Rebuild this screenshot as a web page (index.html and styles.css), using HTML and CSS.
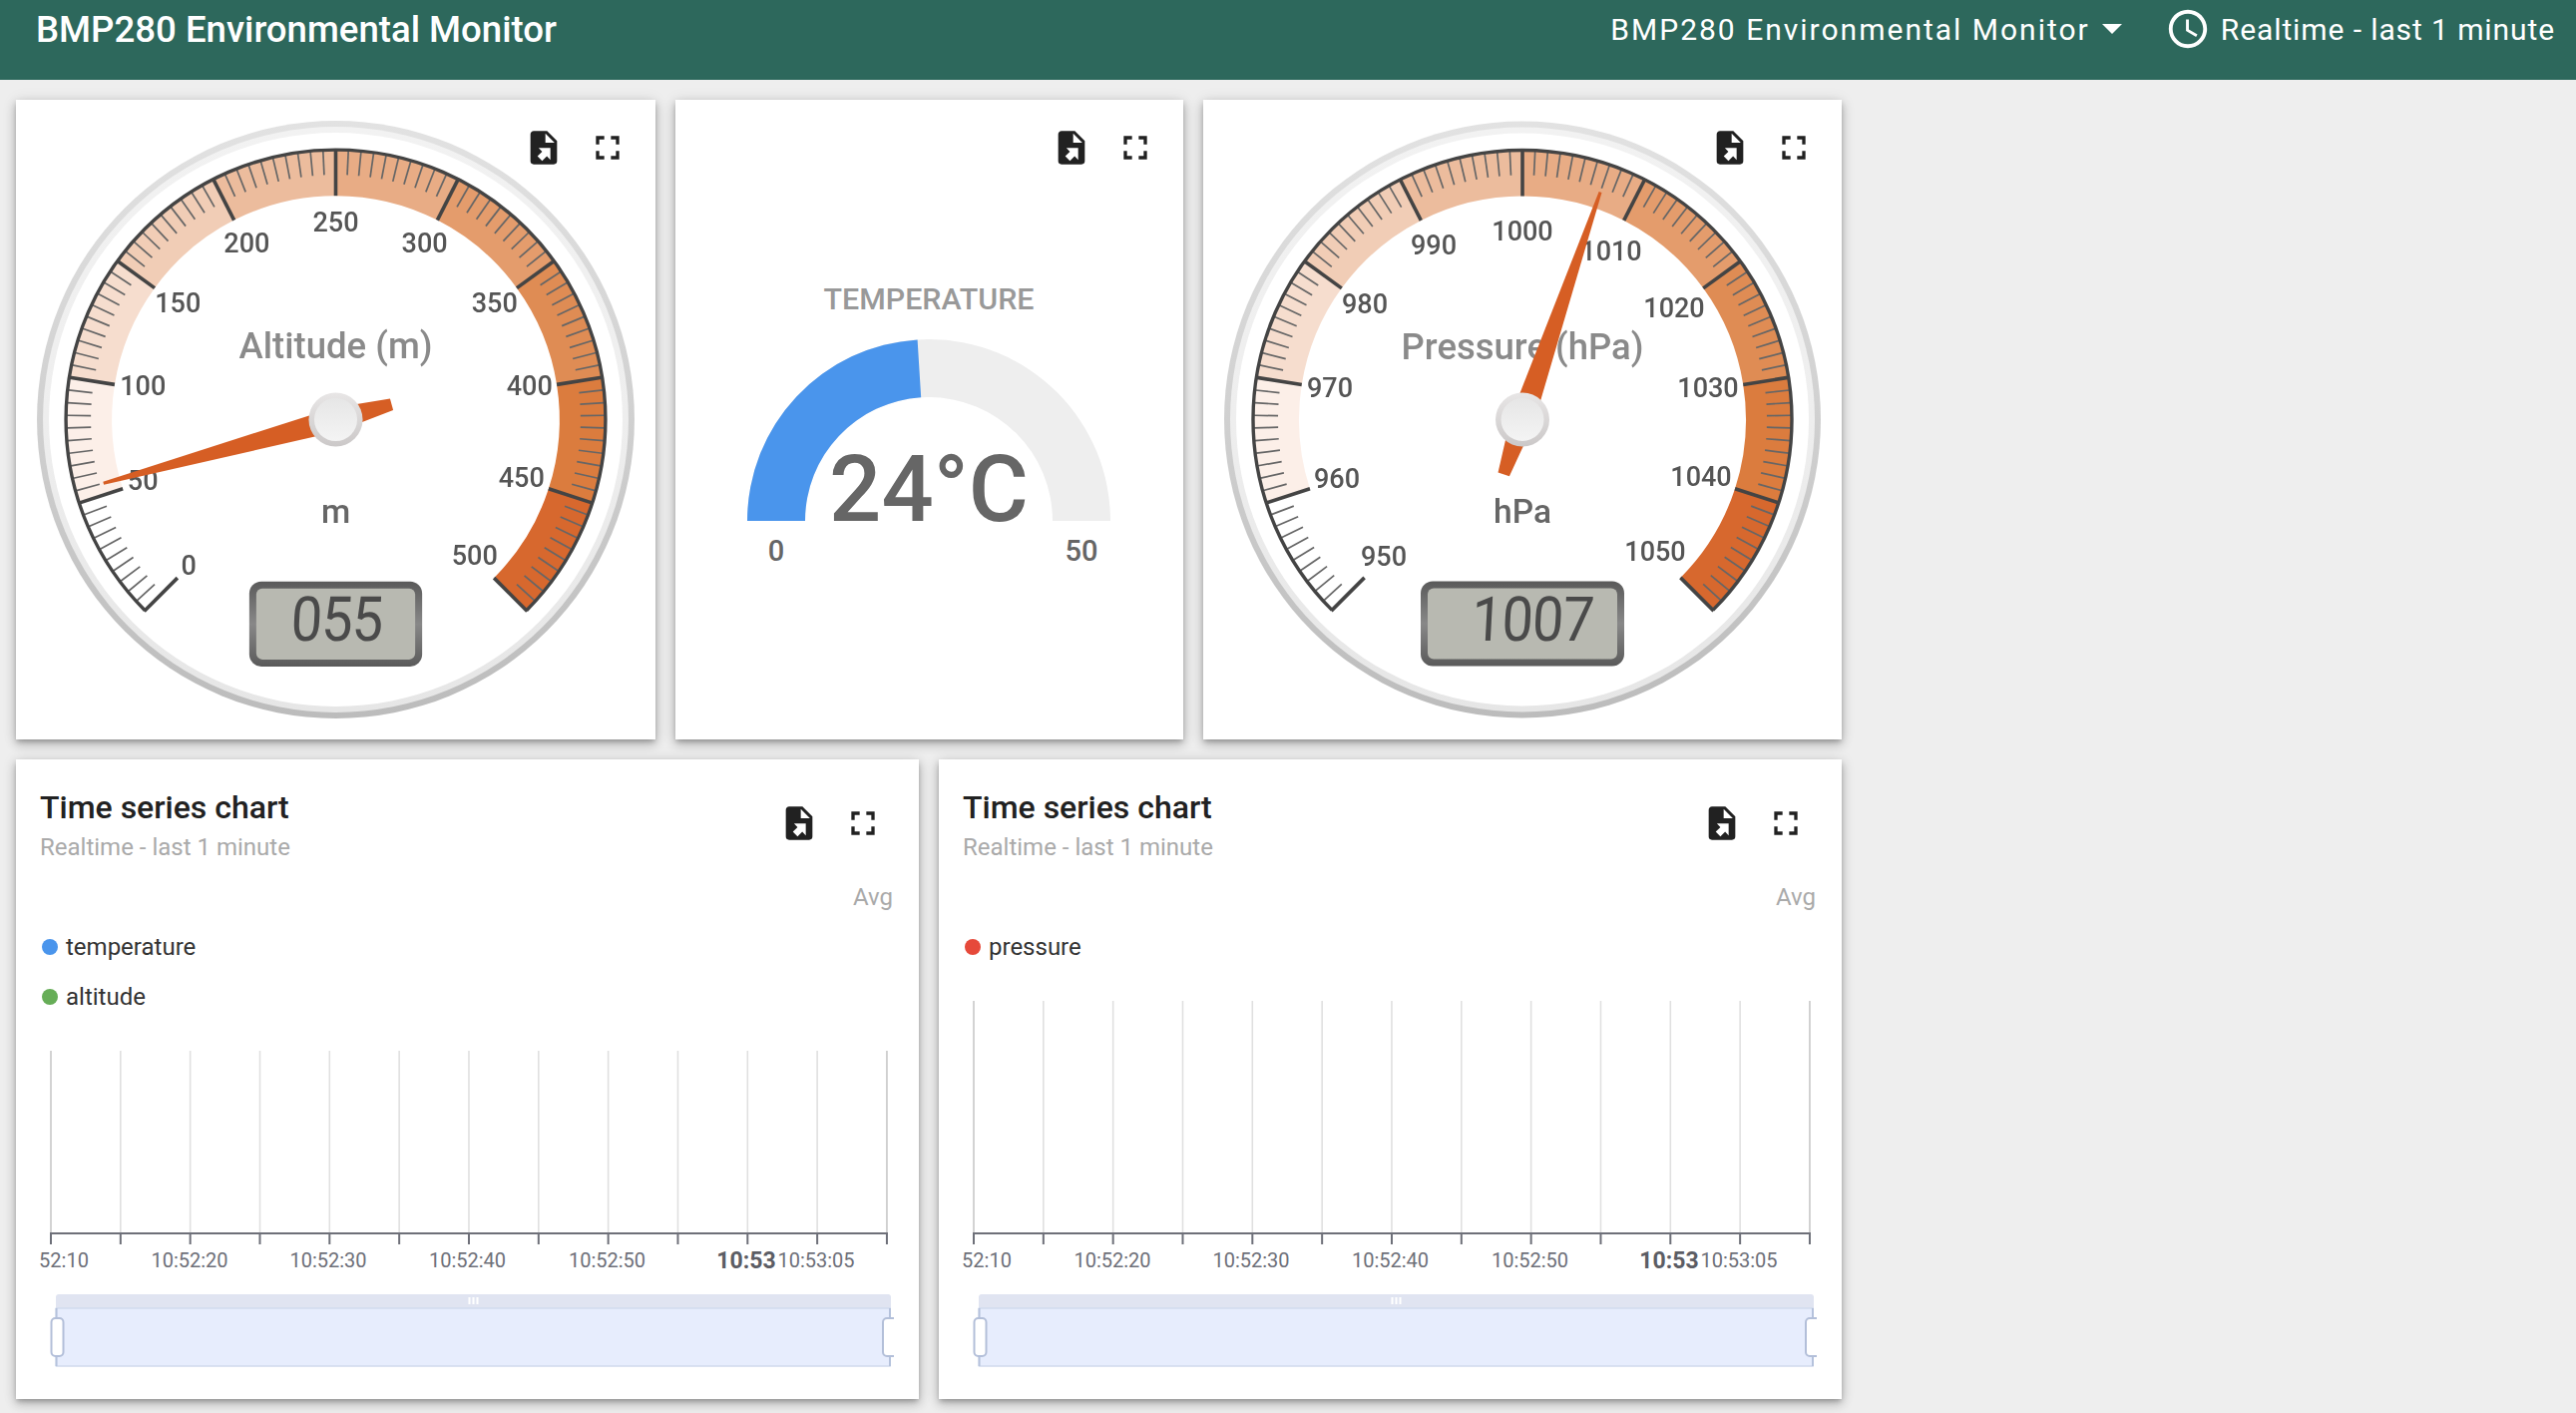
FILE: index.html
```html
<!DOCTYPE html>
<html lang="en">
<head>
    <meta charset="UTF-8">
    <meta name="viewport" content="width=device-width, initial-scale=1.0">
    <title>BMP280 Environmental Monitor</title>
    <link rel="stylesheet" href="styles.css">
</head>
<body>
    <header class="topbar">
        <h1 class="topbar-title">BMP280 Environmental Monitor</h1>
        <button class="topbar-item topbar-select">
            BMP280 Environmental Monitor
            <span class="select-arrow"></span>
        </button>
        <button class="topbar-item topbar-time">
            <svg class="clock-icon" viewBox="0 0 24 24"><path d="M11.99 2C6.47 2 2 6.48 2 12s4.47 10 9.99 10C17.52 22 22 17.52 22 12S17.52 2 11.99 2zM12 20c-4.42 0-8-3.58-8-8s3.58-8 8-8 8 3.58 8 8-3.58 8-8 8zm.5-13H11v6l5.25 3.15.75-1.23-4.5-2.67z"/></svg>
            Realtime - last 1 minute
        </button>
    </header>

    <main class="dashboard">
        <div class="row">
            <section class="card card-gauge">
                <div class="card-tools"></div>
                <svg class="gauge" id="altitude-gauge" viewBox="-320 -320 640 640"></svg>
            </section>
            <section class="card card-temp">
                <div class="card-tools"></div>
                <svg class="temp-gauge" viewBox="0 0 509 641">
                    <text class="temp-label" x="254" y="210">TEMPERATURE</text>
                    <path class="temp-track" d="M 72 422 A 182 182 0 0 1 436 422 L 378 422 A 124 124 0 0 0 130 422 Z"/>
                    <path class="temp-fill" d="M 72 422 A 182 182 0 0 1 242.6 240.4 L 246.2 298.3 A 124 124 0 0 0 130 422 Z"/>
                    <text class="temp-value" x="254" y="422">24°C</text>
                    <text class="temp-limit" x="101" y="462">0</text>
                    <text class="temp-limit" x="407" y="462">50</text>
                </svg>
            </section>
            <section class="card card-gauge card-gauge-last">
                <div class="card-tools"></div>
                <svg class="gauge" id="pressure-gauge" viewBox="-320 -320 640 640"></svg>
            </section>
        </div>

        <div class="row">
            <section class="card card-chart">
                <div class="card-tools"></div>
                <h2 class="chart-title">Time series chart</h2>
                <p class="chart-sub">Realtime - last 1 minute</p>
                <p class="chart-avg">Avg</p>
                <ul class="legend">
                    <li class="legend-item"><span class="dot dot-blue"></span>temperature</li>
                    <li class="legend-item"><span class="dot dot-green"></span>altitude</li>
                </ul>
                <svg class="chart" data-grid="183"></svg>
            </section>
            <section class="card card-chart">
                <div class="card-tools"></div>
                <h2 class="chart-title">Time series chart</h2>
                <p class="chart-sub">Realtime - last 1 minute</p>
                <p class="chart-avg">Avg</p>
                <ul class="legend">
                    <li class="legend-item"><span class="dot dot-red"></span>pressure</li>
                </ul>
                <svg class="chart" data-grid="233"></svg>
            </section>
        </div>
    </main>

    <script src="gauge.js"></script>
</body>
</html>
```

FILE: styles.css
```css
* {
    box-sizing: border-box;
}

body {
    margin: 0;
    background-color: #eeeeee;
    font-family: Roboto, "Liberation Sans", sans-serif;
    color: #212121;
}

.topbar {
    display: flex;
    align-items: center;
    height: 80px;
    padding: 0 21px 22px 36px;
    background-color: #2d685c;
    color: #fff;
}

.topbar-title {
    margin: 0 auto 0 0;
    font-size: 36.6px;
    font-weight: 500;
}

.topbar-item {
    display: flex;
    align-items: center;
    padding: 0;
    border: none;
    background: none;
    color: inherit;
    font-family: inherit;
    font-size: 30px;
    letter-spacing: 0.9px;
}

.topbar-select {
    letter-spacing: 2px;
}

.select-arrow {
    width: 0;
    height: 0;
    margin-left: 12px;
    border-left: 10px solid transparent;
    border-right: 10px solid transparent;
    border-top: 10px solid #fff;
}

.topbar-time {
    margin-left: 43.5px;
}

.clock-icon {
    width: 46px;
    height: 46px;
    margin-right: 9.5px;
    fill: #fff;
}

.dashboard {
    display: flex;
    flex-direction: column;
    gap: 20px;
    width: 1862px;
    padding: 20px 16px 14px;
}

.row {
    display: flex;
    gap: 20px;
}

.card {
    position: relative;
    height: 641px;
    background-color: #fff;
    box-shadow: 0 3px 5px -1px rgba(0, 0, 0, 0.25), 0 5px 10px 1px rgba(0, 0, 0, 0.16), 0 1px 14px 0 rgba(0, 0, 0, 0.1);
}

.card-gauge {
    width: 641px;
}

.card-gauge-last {
    width: 640px;
}

.card-temp {
    width: 509px;
}

.card-chart {
    display: flex;
    flex-direction: column;
    width: 905px;
    padding-top: 29px;
}

/* icon buttons float over the gauges */
.card-tools {
    position: absolute;
    top: 28px;
    right: 28px;
    display: flex;
    gap: 24px;
}

.card-chart .card-tools {
    top: 44px;
    right: 36px;
}

.tool-icon {
    display: block;
    width: 40px;
    height: 40px;
    fill: #212121;
    fill-rule: evenodd;
}

.gauge,
.temp-gauge {
    display: block;
    width: 100%;
    height: 100%;
}

.gauge {
    filter: blur(0.4px);
}

.gauge text {
    font-family: Roboto, sans-serif;
    font-weight: 500;
    text-anchor: middle;
}

.gauge-number {
    font-size: 27px;
    fill: #555;
}

.gauge-title {
    font-size: 36.5px;
    fill: #8a8a8a;
}

.gauge-units {
    font-size: 33.5px;
    fill: #666;
}

.gauge .gauge-value {
    font-size: 62px;
    font-weight: 400;
    letter-spacing: -1px;
    fill: #4a4a4a;
}

.temp-gauge text {
    font-family: Roboto, sans-serif;
    font-weight: 500;
    text-anchor: middle;
}

.temp-gauge .temp-label {
    font-size: 30.4px;
    fill: #999;
}

.temp-track {
    fill: #eeeeee;
}

.temp-fill {
    fill: #4a95ec;
}

.temp-gauge .temp-value {
    font-size: 92px;
    fill: #666;
}

.temp-gauge .temp-limit {
    font-size: 29px;
    fill: #666;
}

.chart-title {
    margin: 0 0 0 24px;
    font-size: 32px;
    font-weight: 500;
    line-height: 38px;
}

.chart-sub {
    margin: 7px 0 0 24px;
    font-size: 24px;
    line-height: 28px;
    color: #aaa;
}

.chart-avg {
    margin: 22px 26px 0 0;
    font-size: 24px;
    line-height: 28px;
    text-align: right;
    color: #aaa;
}

.legend {
    margin: 22px 0 0 0;
    padding: 0 0 0 26px;
    list-style: none;
}

.legend-item {
    display: flex;
    align-items: center;
    height: 28px;
    margin-bottom: 22px;
    font-size: 24px;
    color: #333;
}

.dot {
    width: 16px;
    height: 16px;
    margin-right: 8px;
    border-radius: 50%;
}

.dot-blue {
    background-color: #4a95ec;
}

.dot-green {
    background-color: #66ad57;
}

.dot-red {
    background-color: #e6493a;
}

.chart {
    display: block;
    flex: none;
    width: 905px;
    margin-top: auto;
}

.chart-label {
    font-size: 20px;
    fill: #6e7079;
    text-anchor: middle;
}

.chart-label-bold {
    font-size: 23px;
    font-weight: 700;
    fill: #5c5d64;
}
```

FILE: gauge.js
```js
const SVG_NS = 'http://www.w3.org/2000/svg';

function el(parent, tag, attrs, text) {
    const node = document.createElementNS(SVG_NS, tag);
    for (const key in attrs) {
        node.setAttribute(key, attrs[key]);
    }
    if (text !== undefined) {
        node.textContent = text;
    }
    parent.appendChild(node);
    return node;
}

function polar(r, deg) {
    const rad = deg * Math.PI / 180;
    return [r * Math.sin(rad), -r * Math.cos(rad)];
}

function arc(r, from, to) {
    const a = polar(r, from);
    const b = polar(r, to);
    const large = to - from > 180 ? 1 : 0;
    return `M ${a[0]} ${a[1]} A ${r} ${r} 0 ${large} 1 ${b[0]} ${b[1]}`;
}

function line(parent, r1, r2, deg, stroke, width) {
    const a = polar(r1, deg);
    const b = polar(r2, deg);
    el(parent, 'line', { x1: a[0], y1: a[1], x2: b[0], y2: b[1], stroke: stroke, 'stroke-width': width });
}

function gradient(defs, id, stops) {
    const g = el(defs, 'linearGradient', { id: id, x1: 0, y1: 0, x2: 0, y2: 1 });
    stops.forEach((color, i) => {
        el(g, 'stop', { offset: i / (stops.length - 1), 'stop-color': color });
    });
}

const BANDS = [null, '#fcefe8', '#f6ddce', '#f1cdb6', '#ecbc9d', '#e8ac85', '#e49c6c', '#df8c54', '#db7c3e', '#d7682e'];

function drawGauge(id, opts) {
    const svg = document.getElementById(id);
    const defs = el(svg, 'defs', {});
    gradient(defs, id + '-rim', ['#e2e2e2', '#d0d0d0', '#bcbcbc']);
    gradient(defs, id + '-rim2', ['#f2f2f2', '#eeeeee', '#e6e6e6']);
    gradient(defs, id + '-hub', ['#e8e6e6', '#cbc8c8']);
    gradient(defs, id + '-cap', ['#e6e6e6', '#f4f4f4']);
    gradient(defs, id + '-lcd', ['#5a5a5a', '#888888', '#5a5a5a']);

    // plate
    el(svg, 'circle', { r: 299, fill: `url(#${id}-rim)` });
    el(svg, 'circle', { r: 293, fill: `url(#${id}-rim2)` });
    el(svg, 'circle', { r: 287, fill: '#fff' });

    // colored bands, one per major division
    BANDS.forEach((color, i) => {
        if (color) {
            el(svg, 'path', { d: arc(247, -135 + i * 27, -135 + (i + 1) * 27), fill: 'none', stroke: color, 'stroke-width': 46 });
        }
    });

    // ticks
    for (let i = 0; i <= 100; i++) {
        const deg = -135 + i * 2.7;
        if (i % 10 === 0) {
            line(svg, 224, 271, deg, '#444', 3.6);
        } else {
            line(svg, 245, 269, deg, '#666', 1.7);
        }
    }
    el(svg, 'path', { d: arc(270, -135, 135), fill: 'none', stroke: '#444', 'stroke-width': 3.4 });

    // numbers, placed by hand since they are not on a perfect circle
    opts.numbers.forEach(n => {
        el(svg, 'text', { class: 'gauge-number', x: n[1], y: n[2] + 10 }, n[0]);
    });

    el(svg, 'text', { class: 'gauge-title', x: 0, y: -61 }, opts.title);
    el(svg, 'text', { class: 'gauge-units', x: 0, y: 103 }, opts.units);

    // value box
    const w = opts.boxWidth;
    el(svg, 'rect', { x: -w / 2, y: 162, width: w, height: 85, rx: 12, fill: `url(#${id}-lcd)` });
    el(svg, 'rect', { x: -w / 2 + 7, y: 169, width: w - 14, height: 71, rx: 6, fill: '#b8b9b1' });
    el(svg, 'text', { class: 'gauge-value', transform: `translate(${opts.valueX} 221) skewX(-3) scale(0.9 1)` }, opts.value);

    // needle
    el(svg, 'polygon', {
        points: '-1.5,-241 1.5,-241 12,0 6,58 -6,58 -12,0',
        fill: '#d65e24',
        transform: `rotate(${opts.angle})`
    });

    // hub
    el(svg, 'circle', { r: 27, fill: `url(#${id}-hub)` });
    el(svg, 'circle', { r: 21.5, fill: `url(#${id}-cap)` });
}

drawGauge('altitude-gauge', {
    title: 'Altitude (m)',
    units: 'm',
    value: '055',
    valueX: 0,
    boxWidth: 173,
    angle: -105.3,
    numbers: [
        ['0', -147, 145], ['50', -193, 60], ['100', -193, -34], ['150', -158, -117],
        ['200', -89, -177], ['250', 0, -198], ['300', 89, -177], ['350', 159, -117],
        ['400', 194, -34], ['450', 186, 57], ['500', 139, 135]
    ]
});

drawGauge('pressure-gauge', {
    title: 'Pressure (hPa)',
    units: 'hPa',
    value: '1007',
    valueX: 9,
    boxWidth: 204,
    angle: 18.9,
    numbers: [
        ['950', -139, 136], ['960', -186, 58], ['970', -193, -33], ['980', -158, -117],
        ['990', -89, -176], ['1000', 0, -190], ['1010', 89, -170], ['1020', 152, -113],
        ['1030', 186, -33], ['1040', 179, 56], ['1050', 133, 131]
    ]
});

// the same two icons on every card
const TOOL_PATHS = [
    'M6,2C4.89,2 4,2.9 4,4V20A2,2 0 0,0 6,22H18A2,2 0 0,0 20,20V8L14,2M13,3.5L18.5,9H13M8.93,12.22H16V19.29L13.88,17.17L11.05,20L8.22,17.17L11.05,14.35',
    'M7 14H5v5h5v-2H7v-3zm-2-4h2V7h3V5H5v5zm12 7h-3v2h5v-5h-2v3zM14 5v2h3v3h2V5h-5z'
];

document.querySelectorAll('.card-tools').forEach(tools => {
    TOOL_PATHS.forEach(d => {
        const icon = el(tools, 'svg', { class: 'tool-icon', viewBox: '0 0 24 24' });
        el(icon, 'path', { d: d });
    });
});

function drawChart(svg) {
    const grid = Number(svg.dataset.grid);
    const axis = grid + 13;
    const height = axis + 166;
    svg.setAttribute('viewBox', `0 0 905 ${height}`);
    svg.setAttribute('height', height);

    const left = 35;
    const step = 69.83;
    for (let i = 0; i <= 12; i++) {
        const x = left + i * step;
        const edge = i === 0 || i === 12;
        el(svg, 'line', { x1: x, y1: 13, x2: x, y2: axis, stroke: edge ? '#c8c8c8' : '#e0e0e0', 'stroke-width': 1.6 });
        el(svg, 'line', { x1: x, y1: axis, x2: x, y2: axis + 11, stroke: '#6e7079', 'stroke-width': 2 });
    }
    el(svg, 'line', { x1: left - 1, y1: axis, x2: left + 12 * step + 1, y2: axis, stroke: '#6e7079', 'stroke-width': 2 });

    const labelY = axis + 34;
    el(svg, 'text', { class: 'chart-label', x: 48, y: labelY }, '52:10');
    [['10:52:20', 174], ['10:52:30', 313], ['10:52:40', 452.5], ['10:52:50', 592.5], ['10:53:05', 802]].forEach(l => {
        el(svg, 'text', { class: 'chart-label', x: l[1], y: labelY }, l[0]);
    });
    el(svg, 'text', { class: 'chart-label chart-label-bold', x: 732, y: labelY + 1 }, '10:53');

    // data zoom slider
    el(svg, 'path', { d: `M 40 ${axis + 75} V ${axis + 64} a 3 3 0 0 1 3 -3 H 874 a 3 3 0 0 1 3 3 V ${axis + 75} Z`, fill: '#e0e4f1' });
    el(svg, 'rect', { x: 40.5, y: axis + 75, width: 835.5, height: 58, fill: '#e7edfd', stroke: '#d2dbee', 'stroke-width': 1.6 });
    el(svg, 'line', { x1: 40.5, y1: axis + 75, x2: 40.5, y2: axis + 133, stroke: '#b5c2dc', 'stroke-width': 2 });
    el(svg, 'line', { x1: 876, y1: axis + 75, x2: 876, y2: axis + 133, stroke: '#b5c2dc', 'stroke-width': 2 });
    [-4, 0, 4].forEach(dx => {
        el(svg, 'rect', { x: 457.5 + dx, y: axis + 64, width: 2, height: 7, fill: '#fff' });
    });
    el(svg, 'rect', { x: 35.5, y: axis + 85, width: 12, height: 38, rx: 4, fill: '#fff', stroke: '#b3bfd9', 'stroke-width': 2 });
    el(svg, 'path', { d: `M 880 ${axis + 85} H 873 a 4 4 0 0 0 -4 4 V ${axis + 119} a 4 4 0 0 0 4 4 H 880`, fill: '#fff', stroke: '#b3bfd9', 'stroke-width': 2 });
}

document.querySelectorAll('.chart').forEach(drawChart);
```
